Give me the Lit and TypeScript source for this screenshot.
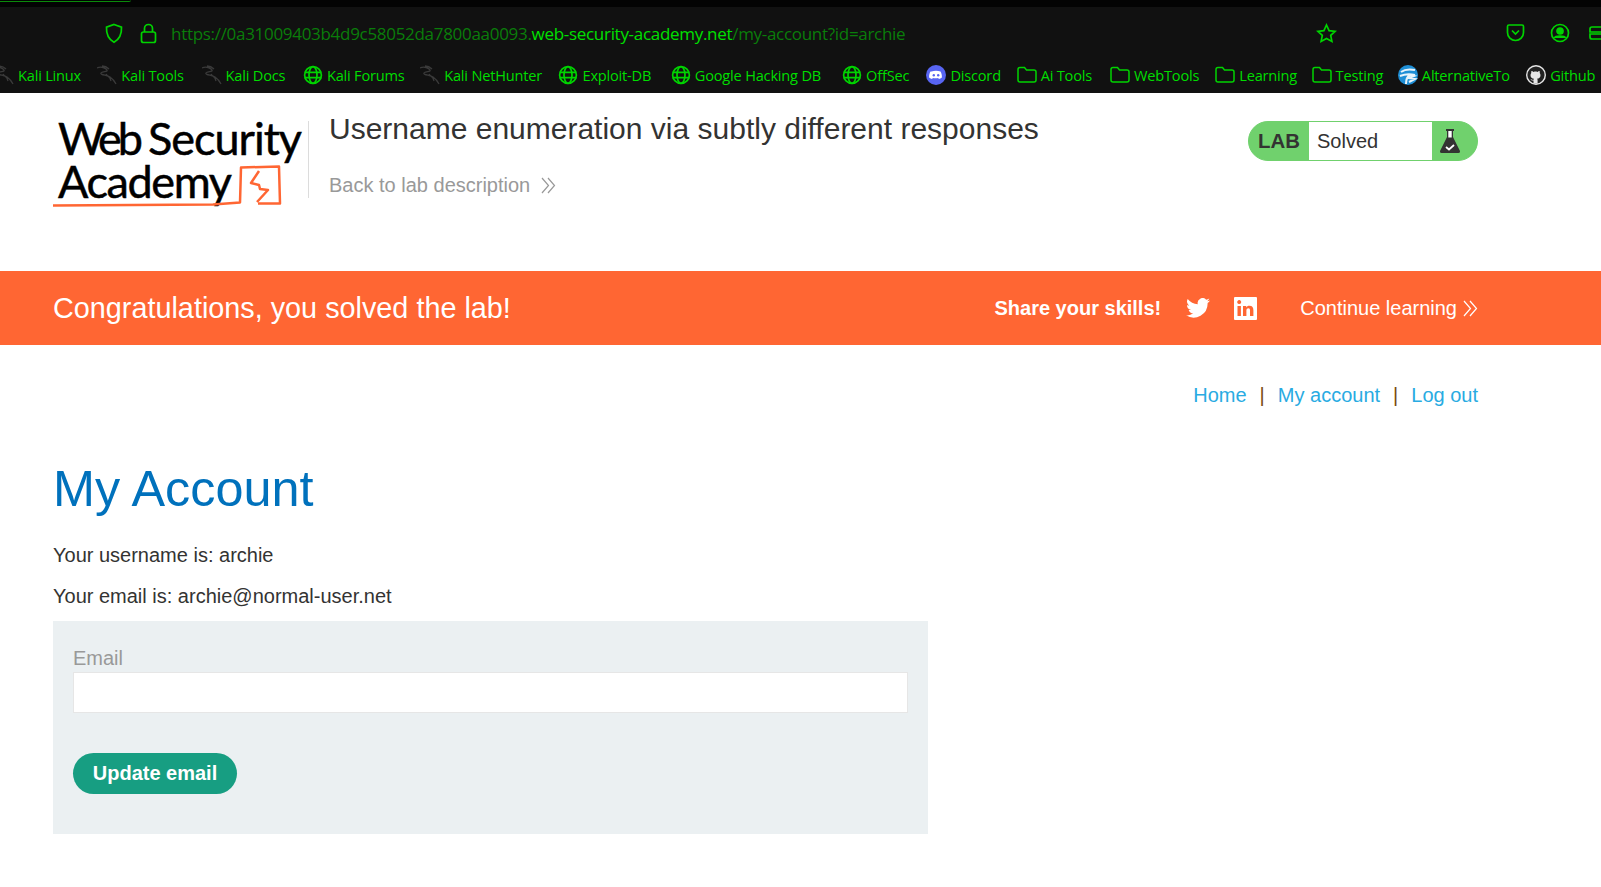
import { LitElement, html, css, svg } from 'lit';
import { customElement } from 'lit/decorators.js';

const G = '#00d400';

const globe = html`<svg class="ic" viewBox="0 0 20 20" fill="none" stroke="${G}" stroke-width="1.7"><circle cx="10" cy="10" r="8.4"/><ellipse cx="10" cy="10" rx="4" ry="8.4"/><path d="M1.6 7.4h16.8M1.6 12.6h16.8"/></svg>`;
const folder = html`<svg class="ic" viewBox="0 0 20 20" fill="none" stroke="${G}" stroke-width="1.5"><path d="M1 4.5q0-2 2-2h4.5l2 2.5h7.5q2 0 2 2v8q0 2-2 2H3q-2 0-2-2z"/></svg>`;
const dragon = html`<svg class="ic" viewBox="0 0 20 20" fill="none" stroke="#3a3a3a" stroke-width="1.3"><path d="M0 3c4-2 9 0 10 2 1 2-5 1-6 3s6 2 9 4 4 3 6 7M5 1c2 0 5 1 7 3M9 9c2 3 4 2 5 7"/></svg>`;
const discord = html`<svg class="ic" viewBox="0 0 20 20"><circle cx="10" cy="10" r="10" fill="#5865f2"/><path d="M5.5 6.6c2.8-1.3 6.2-1.3 9 0 1 1.7 1.5 3.7 1.4 6-1 .8-2 1.2-3 1.4l-.7-1.1c-1.8.5-3.6.5-5.4 0l-.7 1.1c-1-.2-2-.6-3-1.4-.1-2.3.4-4.3 1.4-6z" fill="#fff"/><circle cx="7.8" cy="10.3" r="1.2" fill="#5865f2"/><circle cx="12.2" cy="10.3" r="1.2" fill="#5865f2"/></svg>`;
const alt = html`<svg class="ic" viewBox="0 0 20 20"><circle cx="10" cy="10" r="10" fill="#1f8fd6"/><path d="M3 7c4-3 9-3 14-2M2 11c5-2 10-2 15-1M8 19c0-5 2-8 4-9l4 1-5 2 6 1-6 3" fill="none" stroke="#e8f4fb" stroke-width="2"/></svg>`;
const github = html`<svg class="ic" viewBox="0 0 20 20"><circle cx="10" cy="10" r="10" fill="#e6e6e6"/><circle cx="10" cy="10" r="8.6" fill="#222"/><path d="M7.5 18.5v-3c-2 .4-2.6-.6-3-1.500 1 .2 1.300 1 2.900.9.100-.6.300-1 .6-1.200-2-.3-3.500-1.200-3.500-3.500 0-.9.300-1.600.8-2.200-.1-.5-.2-1.300.1-2 .8 0 1.600.4 2.200.9.600-.2 1.300-.3 1.900-.3s1.300.1 1.900.3c.6-.5 1.400-.9 2.200-.9.300.7.200 1.500.1 2 .5.600.8 1.300.8 2.200 0 2.300-1.500 3.200-3.500 3.500.4.300.6.800.6 1.500v3.300z" fill="#e6e6e6"/></svg>`;

// label, icon, width of the label in the reference
const bookmarks = [
  ['Kali Linux', dragon, 63], ['Kali Tools', dragon, 64], ['Kali Docs', dragon, 61], ['Kali Forums', globe, 77],
  ['Kali NetHunter', dragon, 98], ['Exploit-DB', globe, 72], ['Google Hacking DB', globe, 131], ['OffSec', globe, 44],
  ['Discord', discord, 50], ['Ai Tools', folder, 53], ['WebTools', folder, 65], ['Learning', folder, 56],
  ['Testing', folder, 46], ['AlternativeTo', alt, 88], ['Github', github, 44],
] as const;

const chevrons = (color: string) => svg`<path d="M1 1l6.5 7.5L1 16M7 1l6.5 7.5L7 16" fill="none" stroke="${color}" stroke-width="1.2"/>`;

@customElement('browser-bar')
class BrowserBar extends LitElement {
  static styles = css`
    :host { display: block; background: #111; height: 93px; overflow: hidden; font-family: 'Open Sans', 'Noto Sans', sans-serif; }
    .top { height: 7px; background: #030303; }
    .tab { width: 131px; height: 1px; border-bottom: 1px solid #0a8a0a; border-bottom-right-radius: 3px; }
    .url { display: flex; align-items: center; height: 52px; padding-left: 104px; }
    .url svg { flex: none; }
    .lock { margin-left: 16px; }
    .addr { margin-left: 14px; font-size: 17px; letter-spacing: -0.3px; color: #0a7d0a; white-space: nowrap; }
    .addr b { font-weight: 400; color: #00e000; }
    .right { margin-left: auto; display: flex; align-items: center; }
    .pocket { margin-left: 169px; }
    .acct { margin-left: 25px; }
    .ext { margin-left: 19px; }
    .marks { display: flex; align-items: center; height: 34px; margin: -1px 0 0 -6px; white-space: nowrap; }
    .mark { display: flex; align-items: center; gap: 4px; color: #00dd00; font-size: 14.6px; letter-spacing: -0.2px; margin-right: 16.3px; flex: none; }
    .ic { width: 20px; height: 20px; flex: none; }
  `;
  render() {
    return html`
      <div class="top"><div class="tab"></div></div>
      <div class="url">
        <svg width="20" height="21" viewBox="0 0 20 21" fill="none" stroke="${G}" stroke-width="1.7"><path d="M10 1.5l7.500 2.700c.3 6.800-2 12-7.500 15-5.500-3-7.800-8.200-7.500-15z"/></svg>
        <svg class="lock" width="17" height="21" viewBox="0 0 17 21" fill="none" stroke="${G}" stroke-width="1.7"><rect x="1.5" y="9" width="14" height="10.5" rx="2"/><path d="M4.5 9V5.500a4 4 0 0 1 8 0V9"/></svg>
        <span class="addr">https://0a31009403b4d9c58052da7800aa0093.<b>web-security-academy.net</b>/my-account?id=archie</span>
        <div class="right">
          <svg width="21" height="21" viewBox="0 0 21 21" fill="none" stroke="${G}" stroke-width="1.7"><path d="M10.5 2l2.600 5.600 6 .7-4.400 4.100 1.200 6-5.400-3-5.400 3 1.200-6L1.900 8.300l6-.7z"/></svg>
          <svg class="pocket" width="19" height="18" viewBox="0 0 19 18" fill="none" stroke="${G}" stroke-width="1.7"><path d="M1.5 2.500q0-1.500 1.500-1.500h13q1.500 0 1.500 1.500v6a8 8 0 0 1-16 0z"/><path d="M6 6.500l3.500 3.500L13 6.500"/></svg>
          <svg class="acct" width="20" height="20" viewBox="0 0 20 20" fill="none" stroke="${G}" stroke-width="1.7"><circle cx="10" cy="10" r="8.500"/><circle cx="10" cy="8" r="3" fill="${G}"/><path d="M4.500 15c1-2.500 10-2.500 11 0" fill="${G}"/></svg>
          <svg class="ext" width="12" height="20" viewBox="0 0 12 20" fill="none" stroke="${G}" stroke-width="1.7"><path d="M12 4H3q-2 0-2 2v3h11M12 11H1v3q0 2 2 2h9"/></svg>
        </div>
      </div>
      <div class="marks">
        ${bookmarks.map(([label, icon, w]) => html`<span class="mark">${icon}<span style="width:${w}px">${label}</span></span>`)}
      </div>
    `;
  }
}

@customElement('app-root')
export class AppRoot extends LitElement {
  static styles = css`
    :host { display: block; width: 1601px; height: 887px; overflow: hidden; background: #fff; font-family: 'Liberation Sans', Arial, sans-serif; color: #333332; }
    .academy { display: flex; height: 178px; padding: 0 123px 0 53px; box-sizing: border-box; }
    .logo { width: 255px; height: 110px; margin-top: 14px; flex: none; }
    .logo text { font-family: 'Lato', 'Liberation Sans', sans-serif; fill: #000; stroke: #000; stroke-width: .5; font-size: 45px; }
    .logo path { fill: none; stroke: #ff6633; stroke-width: 2.5; stroke-linejoin: round; }
    .title { border-left: 1px solid #dcdcdc; margin-top: 28px; height: 77px; padding-left: 20px; flex: none; }
    h2 { margin: -12px 0 0; font-size: 30px; font-weight: 400; line-height: 40px; color: #333332; }
    .back { display: flex; align-items: center; gap: 11px; margin-top: 24px; font-size: 20px; line-height: 24px; color: #999; }
    .status { display: flex; align-items: stretch; margin: 28px 0 0 auto; width: 230px; height: 40px; border-radius: 20px; background: #70d16d; box-sizing: border-box; border: 1px solid #70d16d; overflow: hidden; flex: none; }
    .status .lab { width: 60px; flex: none; display: flex; align-items: center; justify-content: center; font-weight: 700; font-size: 20.4px; box-sizing: border-box; }
    .status .val { width: 123px; flex: none; background: #fff; display: flex; align-items: center; padding-left: 8px; box-sizing: border-box; font-size: 20px; }
    .status .flask { flex: 1; display: flex; align-items: center; justify-content: center; padding-right: 9px; }
    .banner { display: flex; align-items: center; height: 74px; background: #ff6633; color: #fff; padding: 0 123px 0 53px; }
    .banner h4 { margin: 0; font-size: 28.8px; font-weight: 400; flex: 1; }
    .share { font-size: 20px; font-weight: 700; margin-right: 25px; }
    .tw { margin-right: 24px; }
    .in { margin-right: 43px; }
    .cont { display: flex; align-items: center; gap: 6px; font-size: 20px; }
    .nav { display: flex; justify-content: flex-end; align-items: center; padding: 38px 123px 0 0; font-size: 20px; line-height: 24px; color: #29abe2; }
    .nav i { font-style: normal; color: #7a4a10; margin: 0 13px; }
    h1 { margin: 52px 0 0 53px; font-size: 50.4px; line-height: 60px; font-weight: 400; color: #0071bc; }
    p { margin: 0 0 0 53px; font-size: 20px; line-height: 24px; color: #333332; }
    .u { margin-top: 24px; }
    .e { margin-top: 17px; }
    form { margin: 13px 0 0 53px; width: 875px; height: 213px; background: #ebf0f2; padding: 25px 20px 0; box-sizing: border-box; }
    label { display: block; font-size: 20px; line-height: 24px; color: #999; }
    input { display: block; width: 100%; height: 41px; box-sizing: border-box; margin-top: 2px; background: #fff; border: 1px solid #e6e6e6; outline: none; }
    button { display: block; margin-top: 40px; width: 164px; height: 41px; border: 0; border-radius: 21px; background: #179e82; color: #fff; font: 700 20px 'Liberation Sans', Arial, sans-serif; }
  `;
  render() {
    return html`
      <browser-bar></browser-bar>
      <div class="academy">
        <svg class="logo" viewBox="0 0 255 110">
          <text x="5" y="48" textLength="85">Web</text>
          <text x="95" y="48" textLength="154">Security</text>
          <text x="5" y="91" textLength="174">Academy</text>
          <path d="M0 98.500l160-1 27-2 1-35 38-1 1 37-22 0"/>
          <path d="M206 64l-8 12 8 2 1 4 8 1-11 12"/>
        </svg>
        <div class="title">
          <h2>Username enumeration via subtly different responses</h2>
          <div class="back">Back to lab description <svg width="15" height="17" viewBox="0 0 15 17">${chevrons('#999')}</svg></div>
        </div>
        <div class="status">
          <div class="lab">LAB</div>
          <div class="val">Solved</div>
          <div class="flask">
            <svg width="22" height="26" viewBox="0 0 22 26"><path d="M7 1h8v2h-1v6l7 14q.5 2-1.500 2h-17Q.5 25 1 23L8 9V3H7z" fill="#333332"/><path d="M9.300 3h3.400v6.500H9.300z" fill="#fff"/><path d="M7 19l3 2.500 5-4.500" fill="none" stroke="#fff" stroke-width="1.800"/></svg>
          </div>
        </div>
      </div>
      <div class="banner">
        <h4>Congratulations, you solved the lab!</h4>
        <span class="share">Share your skills!</span>
        <svg class="tw" width="24" height="20" viewBox="0 0 24 20"><path d="M24 2.400a10 10 0 0 1-2.800.8A5 5 0 0 0 23.300.500a10 10 0 0 1-3.100 1.200 4.900 4.900 0 0 0-8.400 4.500A14 14 0 0 1 1.700.900a4.900 4.900 0 0 0 1.500 6.600 4.900 4.900 0 0 1-2.200-.6 4.900 4.900 0 0 0 3.900 4.900 4.900 4.900 0 0 1-2.200.1 4.900 4.900 0 0 0 4.600 3.400A9.900 9.900 0 0 1 0 17.300 14 14 0 0 0 21.600 5a10 10 0 0 0 2.400-2.600z" fill="#fff"/></svg>
        <svg class="in" width="23" height="23" viewBox="0 0 23 23"><rect width="23" height="23" rx="1" fill="#fff"/><path d="M3.500 9h3.400v10H3.500zM3.300 5.700a2 2 0 1 1 3.800 0 2 2 0 0 1-3.800 0zM9 9h3.200v1.400c.6-1 1.700-1.700 3.200-1.700 3 0 4 1.900 4 4.800V19H16v-5.700c0-1.300-.5-2.100-1.600-2.100s-2 .8-2 2.200V19H9z" fill="#ff6633"/></svg>
        <span class="cont">Continue learning <svg width="15" height="17" viewBox="0 0 15 17">${chevrons('#fff')}</svg></span>
      </div>
      <div class="nav">Home<i>|</i>My account<i>|</i>Log out</div>
      <h1>My Account</h1>
      <p class="u">Your username is: archie</p>
      <p class="e">Your email is: archie@normal-user.net</p>
      <form>
        <label>Email</label>
        <input type="email" />
        <button type="button">Update email</button>
      </form>
    `;
  }
}
void BrowserBar;
